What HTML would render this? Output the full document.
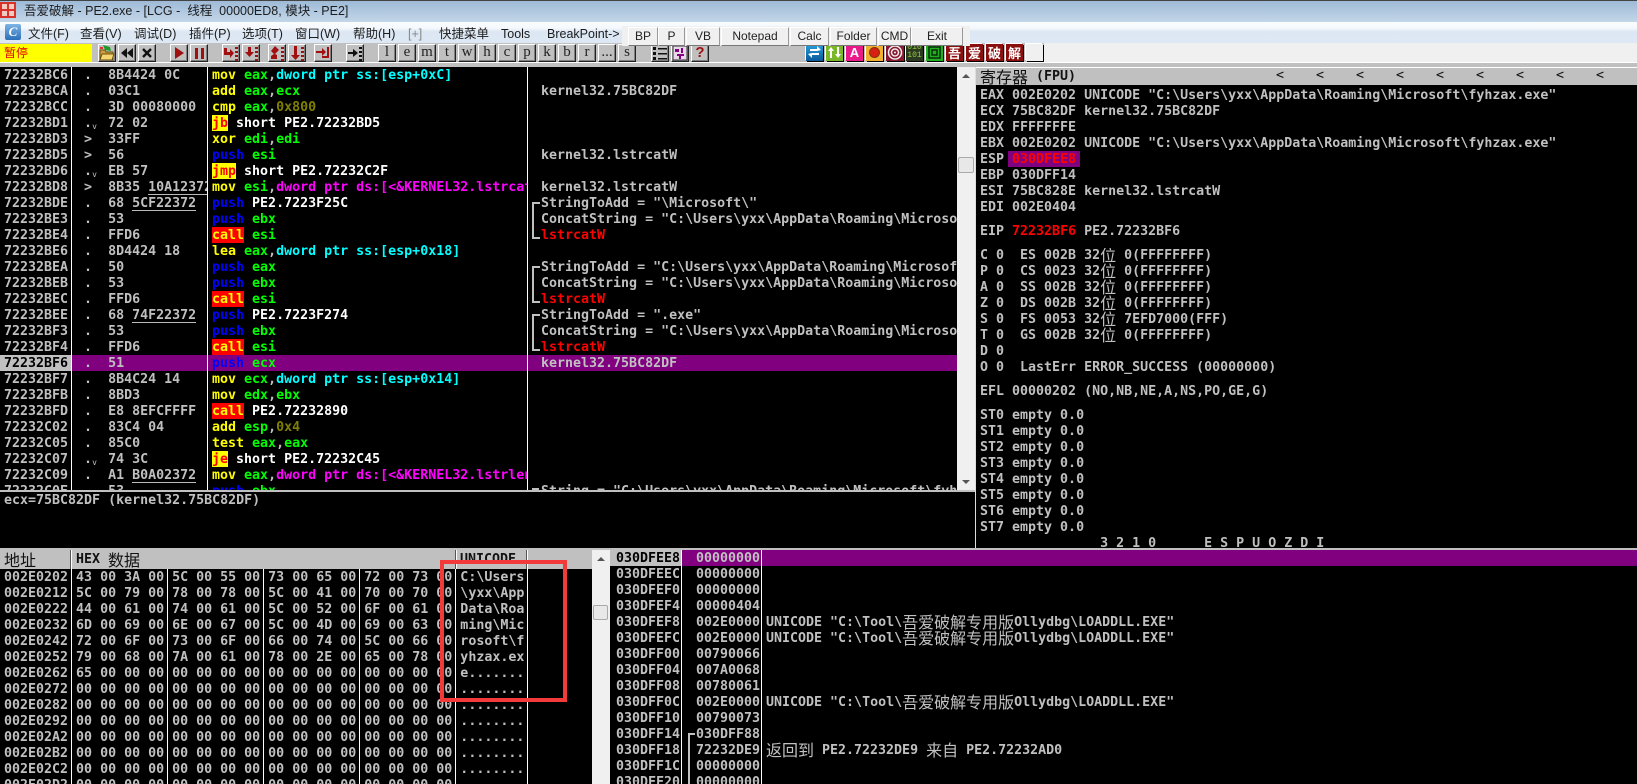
<!DOCTYPE html>
<html>
<head>
<meta charset="utf-8">
<title>吾爱破解 - PE2.exe</title>
<style>
html,body{margin:0;padding:0;width:1637px;height:784px;overflow:hidden;background:#000}
#app{position:relative;width:1637px;height:784px;overflow:hidden;background:#000}
.x{position:absolute;display:block}
pre{position:absolute;margin:0;font-family:"DejaVu Sans Mono","Liberation Mono",monospace;font-size:13.3px;font-weight:bold;line-height:16px;color:#c0c0c0;white-space:pre;overflow:hidden;font-variant-ligatures:none}
.ui{position:absolute;font-family:"Liberation Sans","Noto Sans CJK SC",sans-serif;font-size:12.5px;line-height:16px;color:#1c1c1c;white-space:pre}
.cj{display:inline-block;position:relative;top:-2px;font-family:"WenQuanYi Zen Hei","Noto Sans CJK SC",sans-serif;font-weight:normal;font-size:16px;line-height:16px;height:16px;vertical-align:top}
.y{color:#ff0}.g{color:#0f0}.c{color:#0ff}.m{color:#f0f}.o{color:#808000}.w{color:#fff}.b{color:#00f}.r{color:#f00}.k{color:#000}
.jb{display:inline-block;height:16px;vertical-align:top;background:linear-gradient(#ff0,#ff0) 0 0/100% 15px no-repeat;box-shadow:0 -1px #ff0;color:#f00}
.cl{display:inline-block;height:16px;vertical-align:top;background:linear-gradient(#f00,#f00) 0 0/100% 15px no-repeat;box-shadow:0 -1px #f00;color:#ff0}
.u{display:inline-block;height:15px;vertical-align:top;box-shadow:inset 0 -1px #bbb}
.v{display:inline-block;width:8px;height:16px;vertical-align:top;font-size:8px;line-height:21px;font-weight:normal}
.t{position:absolute;top:44px;width:16px;height:16px;background:#c0c0c0;border:1px solid;border-color:#fff #222 #222 #fff;box-shadow:inset -1px -1px #808080;overflow:hidden;text-align:center}
.t svg{display:block;width:16px;height:16px}
.l{font-family:"Liberation Serif",serif;font-size:15px;line-height:15px;color:#222}
.f{position:absolute;top:27px;height:17px;background:#f0f0f0;border:1px solid;border-color:#fff #999 #777 #fff;font-family:"Liberation Sans",sans-serif;font-size:12px;line-height:17px;color:#222;text-align:center}
.ic{position:absolute;top:44px;width:17px;height:17px;box-shadow:1px 1px #000,-1px -1px #fff;overflow:hidden}
.c2{position:absolute;top:44px;width:17px;height:17px;background:#8b0f0f;color:#fff;box-shadow:1px 1px #000,-1px -1px #fff;font-family:"Noto Sans CJK SC",sans-serif;font-weight:bold;font-size:13px;line-height:17px;text-align:center;overflow:hidden}
.sel{position:absolute;background:#800080}
.vl{position:absolute;width:1px;background:#fff}
.br{position:absolute;left:532px;width:6px;border:2px solid #c0c0c0;border-right:0}
.sb{position:absolute;background:#f0f0f0}
.th{position:absolute;background:#e8e8e8;border:1px solid #aaa;border-radius:2px}
.ar{position:absolute;width:0;height:0;border-left:4px solid transparent;border-right:4px solid transparent}
.hd{position:absolute;background:#c0c0c0}
</style>
</head>
<body>
<div id="app">

<!-- title bar -->
<div class="x" style="left:0;top:0;width:1637px;height:22px;background:linear-gradient(#9db9d6,#c3d6e8)"></div>
<div class="x" style="left:0;top:0;width:1637px;height:1px;background:#444"></div>
<div class="x" style="left:0;top:2px;width:16px;height:16px;background:#d8332a"></div>
<div class="x" style="left:2px;top:4px;width:5px;height:5px;background:#f3c9c0"></div>
<div class="x" style="left:9px;top:4px;width:5px;height:5px;background:#f3c9c0"></div>
<div class="x" style="left:2px;top:11px;width:5px;height:5px;background:#f3c9c0"></div>
<div class="x" style="left:9px;top:11px;width:5px;height:5px;background:#f3c9c0"></div>
<div class="ui" style="left:24px;top:3px;font-size:12.5px">吾爱破解 - PE2.exe - [LCG -  线程  00000ED8, 模块 - PE2]</div>

<!-- menu bar -->
<div class="x" style="left:0;top:22px;width:1637px;height:21px;background:linear-gradient(#fbfdff 0,#f4f8fc 30%,#dce7f3 45%,#dde8f4 100%)"></div>
<div class="x" style="left:5px;top:24px;width:16px;height:16px;background:linear-gradient(#7fb4e6,#2b6fb8);border-radius:2px;color:#fff;font:bold italic 13px/16px 'Liberation Serif',serif;text-align:center">C</div>
<div class="ui" style="left:28px;top:26px">文件(F)</div>
<div class="ui" style="left:80px;top:26px">查看(V)</div>
<div class="ui" style="left:134px;top:26px">调试(D)</div>
<div class="ui" style="left:189px;top:26px">插件(P)</div>
<div class="ui" style="left:242px;top:26px">选项(T)</div>
<div class="ui" style="left:295px;top:26px">窗口(W)</div>
<div class="ui" style="left:353px;top:26px">帮助(H)</div>
<div class="ui" style="left:408px;top:26px;color:#888">[+]</div>
<div class="ui" style="left:439px;top:26px">快捷菜单</div>
<div class="ui" style="left:501px;top:26px">Tools</div>
<div class="ui" style="left:547px;top:26px">BreakPoint-&gt;</div>

<!-- toolbar -->
<div class="x" style="left:0;top:43px;width:1044px;height:19px;background:#c0c0c0"></div>
<div class="x" style="left:1044px;top:43px;width:593px;height:19px;background:#f0f0f0"></div>
<div class="x" style="left:0;top:62px;width:1637px;height:1px;background:#fff"></div>
<div class="x" style="left:0;top:63px;width:1637px;height:4px;background:#c0c0c0"></div>
<div class="x" style="left:0;top:44px;width:92px;height:18px;background:#ff0"></div>
<div class="ui" style="left:4px;top:45px;color:#e00000;font-size:12px">暂停</div>

<div class="t" style="left:98px"><svg viewBox="0 0 16 16"><path d="M1 5h5l1 2h7v8H1z" fill="#c8a040" stroke="#6b5010" stroke-width="1"/><path d="M3 9h12l-2 6H1z" fill="#f5d570" stroke="#6b5010"/><path d="M4 0l7 2 1 4-6-1z" fill="#1d9a2a"/><path d="M1 2h3v2H1z" fill="#d33"/></svg></div>
<div class="t" style="left:118px"><svg viewBox="0 0 16 16"><path d="M8 3v10L2 8zM14 3v10L8 8z" fill="#111"/></svg></div>
<div class="t" style="left:138px"><svg viewBox="0 0 16 16"><path d="M4 4l8 8M12 4l-8 8" stroke="#111" stroke-width="2.400" fill="none"/></svg></div>
<div class="t" style="left:170px"><svg viewBox="0 0 16 16"><path d="M4 2l9 6-9 6z" fill="#a01010"/></svg></div>
<div class="t" style="left:190px"><svg viewBox="0 0 16 16"><path d="M4 3h3v11H4zM10 3h3v11h-3z" fill="#a01010"/></svg></div>
<div class="t" style="left:222px"><svg viewBox="0 0 16 16"><path d="M1 3h3v4h3V4l4 4-4 5v-3H1z" fill="#a01010"/><path d="M12 2h3v2h-3zM12 6h3v2h-3zM12 10h3v2h-3zM12 14h3v2h-3z" fill="#a01010"/></svg></div>
<div class="t" style="left:242px"><svg viewBox="0 0 16 16"><path d="M5 2h3v5h3l-4.500 5L2 7h3z" fill="#a01010"/><path d="M12 2h3v2h-3zM12 6h3v2h-3zM12 10h3v2h-3zM12 14h3v2h-3z" fill="#a01010"/></svg></div>
<div class="t" style="left:268px"><svg viewBox="0 0 16 16"><path d="M6 1l4 4-4 4 2 1v4H2v-3l3-2-3-3z" fill="#a01010"/><path d="M12 2h3v2h-3zM12 6h3v2h-3zM12 10h3v2h-3zM12 14h3v2h-3z" fill="#a01010"/></svg></div>
<div class="t" style="left:288px"><svg viewBox="0 0 16 16"><path d="M5 1h3v9h3l-4.500 5L2 10h3z" fill="#a01010"/><path d="M12 2h3v2h-3zM12 6h3v2h-3zM12 10h3v2h-3zM12 14h3v2h-3z" fill="#a01010"/></svg></div>
<div class="t" style="left:314px"><svg viewBox="0 0 16 16"><path d="M1 6h6V3l4 4-4 4V8H1z" fill="#a01010"/><path d="M12 2h2v11H7v-2h5z" fill="#a01010"/></svg></div>
<div class="t" style="left:346px"><svg viewBox="0 0 16 16"><path d="M1 7h5V4l5 4-5 4V9H1z" fill="#111"/><path d="M12 2h3v2h-3zM12 6h3v2h-3zM12 10h3v2h-3zM12 14h3v2h-3z" fill="#111"/></svg></div>

<div class="t l" style="left:378px">l</div>
<div class="t l" style="left:398px">e</div>
<div class="t l" style="left:418px">m</div>
<div class="t l" style="left:438px">t</div>
<div class="t l" style="left:458px">w</div>
<div class="t l" style="left:478px">h</div>
<div class="t l" style="left:498px">c</div>
<div class="t l" style="left:518px">p</div>
<div class="t l" style="left:538px">k</div>
<div class="t l" style="left:558px">b</div>
<div class="t l" style="left:578px">r</div>
<div class="t l" style="left:598px">...</div>
<div class="t l" style="left:618px">s</div>
<div class="t" style="left:651px"><svg viewBox="0 0 16 16"><path d="M1 2h3v3H1zM1 7h3v3H1zM1 12h3v3H1zM6 3h9v1.500H6zM6 8h9v1.500H6zM6 13h9v1.500H6z" fill="#111"/></svg></div>
<div class="t" style="left:671px"><svg viewBox="0 0 16 16"><path d="M1 1h14v14H1z" fill="#e8d8e8" stroke="#333"/><path d="M3 4h4v3H3zM9 3h2v5H9zM5 9h7v2H5zM7 11h2v3H7z" fill="#800080"/></svg></div>
<div class="t l" style="left:691px;color:#a01010;font-family:'Liberation Sans',sans-serif;font-weight:bold">?</div>

<div class="ic" style="left:806px;background:linear-gradient(#28a0e0,#0a5a9a)"><svg width="17" height="17"><path d="M4 5h7V2l4 4-4 1H4zM13 11H6v3L2 10l4-1h7z" fill="#fff"/></svg></div>
<div class="ic" style="left:826px;background:#7ab82a"><svg width="17" height="17"><path d="M5 3l3 4H6v7H4V7H2zM12 14l-3-4h2V3h2v7h2z" fill="#fff"/></svg></div>
<div class="ic" style="left:846px;background:#ea1a8a;color:#fff;font:bold 13px/17px 'Liberation Sans',sans-serif;text-align:center">A</div>
<div class="ic" style="left:866px;background:#f0b030"><svg width="17" height="17"><circle cx="8.500" cy="8.500" r="5" fill="#d82010" stroke="#803010"/></svg></div>
<div class="ic" style="left:886px;width:18px;background:#8a1830"><svg width="18" height="17"><circle cx="9" cy="8.500" r="6.500" fill="none" stroke="#eee" stroke-width="1.500"/><circle cx="9" cy="8.500" r="3.500" fill="none" stroke="#eee" stroke-width="1.500"/><circle cx="9" cy="8.500" r="1" fill="#eee"/></svg></div>
<div class="ic" style="left:906px;background:#2a3a20;color:#9acb40;font:8px/8px 'Liberation Mono',monospace;text-align:center">010<br>101</div>
<div class="ic" style="left:926px;background:#20b020"><svg width="17" height="17"><path d="M3 3h11v11H3zM6 6h5v5H6z" fill="none" stroke="#0a2a0a" stroke-width="1.500"/></svg></div>
<div class="c2" style="left:946px">吾</div>
<div class="c2" style="left:966px">爱</div>
<div class="c2" style="left:986px">破</div>
<div class="c2" style="left:1006px">解</div>
<div class="ic" style="left:1026px;background:#f0f0f0"></div>

<!-- floating toolbar -->
<div class="x" style="left:622px;top:26px;width:348px;height:20px;background:#f0f0f0"></div>
<div class="f" style="left:628px;width:28px">BP</div>
<div class="f" style="left:658px;width:25px">P</div>
<div class="f" style="left:686px;width:32px">VB</div>
<div class="f" style="left:721px;width:66px">Notepad</div>
<div class="f" style="left:790px;width:37px">Calc</div>
<div class="f" style="left:830px;width:45px">Folder</div>
<div class="f" style="left:878px;width:31px">CMD</div>
<div class="f" style="left:911px;width:50px">Exit</div>

<!-- selected row, disasm -->
<div class="x" style="left:0;top:355px;width:72px;height:16px;background:#c0c0c0"></div>
<div class="sel" style="left:72px;top:355px;width:885px;height:16px"></div>
<div class="vl" style="left:71px;top:67px;height:423px"></div>
<div class="vl" style="left:207px;top:67px;height:423px"></div>
<div class="vl" style="left:527px;top:67px;height:423px"></div>

<pre style="left:4px;top:68px;width:203px;height:422px">72232BC6  .  8B4424 0C
72232BCA  .  03C1
72232BCC  .  3D 00080000
72232BD1  .<span class="v">v</span> 72 02
72232BD3  &gt;  33FF
72232BD5  &gt;  56
72232BD6  .<span class="v">v</span> EB 57
72232BD8  &gt;  8B35 <span class="u">10A12372</span>
72232BDE  .  68 <span class="u">5CF22372</span>
72232BE3  .  53
72232BE4  .  FFD6
72232BE6  .  8D4424 18
72232BEA  .  50
72232BEB  .  53
72232BEC  .  FFD6
72232BEE  .  68 <span class="u">74F22372</span>
72232BF3  .  53
72232BF4  .  FFD6
<span class="k">72232BF6</span>  .  51
72232BF7  .  8B4C24 14
72232BFB  .  8BD3
72232BFD  .  E8 8EFCFFFF
72232C02  .  83C4 04
72232C05  .  85C0
72232C07  .<span class="v">v</span> 74 3C
72232C09  .  A1 <span class="u">B0A02372</span>
72232C0E  .  53</pre>

<pre style="left:212px;top:68px;width:315px;height:422px"><span class="y">mov</span> <span class="g">eax</span>,<span class="c">dword ptr ss:[esp+0xC]</span>
<span class="y">add</span> <span class="g">eax</span>,<span class="g">ecx</span>
<span class="y">cmp</span> <span class="g">eax</span>,<span class="o">0x800</span>
<span class="jb">jb</span> <span class="w">short PE2.72232BD5</span>
<span class="y">xor</span> <span class="g">edi</span>,<span class="g">edi</span>
<span class="b">push</span> <span class="g">esi</span>
<span class="jb">jmp</span> <span class="w">short PE2.72232C2F</span>
<span class="y">mov</span> <span class="g">esi</span>,<span class="m">dword ptr ds:[&lt;&amp;KERNEL32.lstrcatW&gt;]</span>
<span class="b">push</span> <span class="w">PE2.7223F25C</span>
<span class="b">push</span> <span class="g">ebx</span>
<span class="cl">call</span> <span class="g">esi</span>
<span class="y">lea</span> <span class="g">eax</span>,<span class="c">dword ptr ss:[esp+0x18]</span>
<span class="b">push</span> <span class="g">eax</span>
<span class="b">push</span> <span class="g">ebx</span>
<span class="cl">call</span> <span class="g">esi</span>
<span class="b">push</span> <span class="w">PE2.7223F274</span>
<span class="b">push</span> <span class="g">ebx</span>
<span class="cl">call</span> <span class="g">esi</span>
<span class="b">push</span> <span class="g">ecx</span>
<span class="y">mov</span> <span class="g">ecx</span>,<span class="c">dword ptr ss:[esp+0x14]</span>
<span class="y">mov</span> <span class="g">edx</span>,<span class="g">ebx</span>
<span class="cl">call</span> <span class="w">PE2.72232890</span>
<span class="y">add</span> <span class="g">esp</span>,<span class="o">0x4</span>
<span class="y">test</span> <span class="g">eax</span>,<span class="g">eax</span>
<span class="jb">je</span> <span class="w">short PE2.72232C45</span>
<span class="y">mov</span> <span class="g">eax</span>,<span class="m">dword ptr ds:[&lt;&amp;KERNEL32.lstrlenW&gt;]</span>
<span class="b">push</span> <span class="g">ebx</span></pre>

<pre style="left:541px;top:68px;width:416px;height:422px">

kernel32.75BC82DF



kernel32.lstrcatW

kernel32.lstrcatW
StringToAdd = "\Microsoft\"
ConcatString = "C:\Users\yxx\AppData\Roaming\Microsoft\fyhzax.exe"
<span class="r">lstrcatW</span>

StringToAdd = "C:\Users\yxx\AppData\Roaming\Microsoft\fyhzax"
ConcatString = "C:\Users\yxx\AppData\Roaming\Microsoft\fyhzax"
<span class="r">lstrcatW</span>
StringToAdd = ".exe"
ConcatString = "C:\Users\yxx\AppData\Roaming\Microsoft\fyhzax.exe"
<span class="r">lstrcatW</span>
kernel32.75BC82DF







String = "C:\Users\yxx\AppData\Roaming\Microsoft\fyhzax.exe"</pre>
<div class="br" style="top:202px;height:33px"></div>
<div class="br" style="top:266px;height:33px"></div>
<div class="br" style="top:314px;height:33px"></div>
<div class="x" style="left:532px;top:488px;width:7px;height:2px;background:#c0c0c0"></div>

<!-- disasm scrollbar -->
<div class="sb" style="left:957px;top:67px;width:18px;height:423px"></div>
<div class="ar" style="left:962px;top:74px;border-bottom:4px solid #555"></div>
<div class="ar" style="left:962px;top:480px;border-top:4px solid #555"></div>
<div class="th" style="left:958px;top:157px;width:14px;height:14px"></div>

<!-- info pane -->
<div class="x" style="left:0;top:490px;width:975px;height:2px;background:#c0c0c0"></div>
<pre style="left:4px;top:493px;width:900px;height:16px">ecx=75BC82DF (kernel32.75BC82DF)</pre>

<!-- registers -->
<div class="x" style="left:975px;top:67px;width:1px;height:483px;background:#ddd"></div>
<div class="hd" style="left:976px;top:67px;width:661px;height:18px"></div>
<div class="x" style="left:976px;top:67px;width:661px;height:1px;background:#fff"></div>
<pre style="left:980px;top:69px;width:200px;height:16px;color:#111;line-height:16px"><span class="cj" style="width:48px;top:-1px">寄存器</span> (FPU)</pre>
<pre style="left:1276px;top:68px;width:8px;color:#111;font-weight:normal">&lt;</pre>
<pre style="left:1316px;top:68px;width:8px;color:#111;font-weight:normal">&lt;</pre>
<pre style="left:1356px;top:68px;width:8px;color:#111;font-weight:normal">&lt;</pre>
<pre style="left:1396px;top:68px;width:8px;color:#111;font-weight:normal">&lt;</pre>
<pre style="left:1436px;top:68px;width:8px;color:#111;font-weight:normal">&lt;</pre>
<pre style="left:1476px;top:68px;width:8px;color:#111;font-weight:normal">&lt;</pre>
<pre style="left:1516px;top:68px;width:8px;color:#111;font-weight:normal">&lt;</pre>
<pre style="left:1556px;top:68px;width:8px;color:#111;font-weight:normal">&lt;</pre>
<pre style="left:1596px;top:68px;width:8px;color:#111;font-weight:normal">&lt;</pre>

<div class="x" style="left:1008px;top:151px;width:72px;height:16px;background:#800080"></div>
<pre style="left:980px;top:88px;width:650px">EAX 002E0202 UNICODE "C:\Users\yxx\AppData\Roaming\Microsoft\fyhzax.exe"
ECX 75BC82DF kernel32.75BC82DF
EDX FFFFFFFE
EBX 002E0202 UNICODE "C:\Users\yxx\AppData\Roaming\Microsoft\fyhzax.exe"
ESP <span class="r">030DFEE8</span>
EBP 030DFF14
ESI 75BC828E kernel32.lstrcatW
EDI 002E0404</pre>
<pre style="left:980px;top:224px;width:650px">EIP <span class="r">72232BF6</span> PE2.72232BF6</pre>
<pre style="left:980px;top:248px;width:650px">C 0  ES 002B 32<span class="cj" style="width:16px">位</span> 0(FFFFFFFF)
P 0  CS 0023 32<span class="cj" style="width:16px">位</span> 0(FFFFFFFF)
A 0  SS 002B 32<span class="cj" style="width:16px">位</span> 0(FFFFFFFF)
Z 0  DS 002B 32<span class="cj" style="width:16px">位</span> 0(FFFFFFFF)
S 0  FS 0053 32<span class="cj" style="width:16px">位</span> 7EFD7000(FFF)
T 0  GS 002B 32<span class="cj" style="width:16px">位</span> 0(FFFFFFFF)
D 0
O 0  LastErr ERROR_SUCCESS (00000000)</pre>
<pre style="left:980px;top:384px;width:650px">EFL 00000202 (NO,NB,NE,A,NS,PO,GE,G)</pre>
<pre style="left:980px;top:408px;width:650px;height:140px">ST0 empty 0.0
ST1 empty 0.0
ST2 empty 0.0
ST3 empty 0.0
ST4 empty 0.0
ST5 empty 0.0
ST6 empty 0.0
ST7 empty 0.0
               3 2 1 0      E S P U O Z D I</pre>

<!-- dump -->
<div class="x" style="left:0;top:548px;width:1637px;height:2px;background:#c0c0c0"></div>
<div class="hd" style="left:0;top:550px;width:592px;height:19px"></div>
<div class="x" style="left:71px;top:550px;width:1px;height:19px;background:#fff"></div>
<div class="x" style="left:70px;top:550px;width:1px;height:19px;background:#555"></div>
<div class="x" style="left:456px;top:550px;width:1px;height:19px;background:#fff"></div>
<div class="x" style="left:455px;top:550px;width:1px;height:19px;background:#555"></div>
<div class="x" style="left:527px;top:550px;width:1px;height:19px;background:#fff"></div>
<div class="x" style="left:526px;top:550px;width:1px;height:19px;background:#555"></div>
<pre style="left:4px;top:551px;width:60px;height:18px;color:#111"><span class="cj" style="width:32px;top:0">地址</span></pre>
<pre style="left:76px;top:552px;width:370px;height:17px;color:#111">HEX <span class="cj" style="width:32px;top:-1px">数据</span></pre>
<pre style="left:460px;top:552px;width:64px;height:17px;color:#111">UNICODE</pre>

<div class="vl" style="left:71px;top:569px;height:215px"></div>
<div class="vl" style="left:167px;top:569px;height:215px"></div>
<div class="vl" style="left:263px;top:569px;height:215px"></div>
<div class="vl" style="left:359px;top:569px;height:215px"></div>
<div class="vl" style="left:455px;top:569px;height:215px"></div>
<div class="vl" style="left:527px;top:569px;height:215px"></div>

<pre style="left:4px;top:570px;width:525px;height:214px">002E0202 43 00 3A 00 5C 00 55 00 73 00 65 00 72 00 73 00 C:\Users
002E0212 5C 00 79 00 78 00 78 00 5C 00 41 00 70 00 70 00 \yxx\App
002E0222 44 00 61 00 74 00 61 00 5C 00 52 00 6F 00 61 00 Data\Roa
002E0232 6D 00 69 00 6E 00 67 00 5C 00 4D 00 69 00 63 00 ming\Mic
002E0242 72 00 6F 00 73 00 6F 00 66 00 74 00 5C 00 66 00 rosoft\f
002E0252 79 00 68 00 7A 00 61 00 78 00 2E 00 65 00 78 00 yhzax.ex
002E0262 65 00 00 00 00 00 00 00 00 00 00 00 00 00 00 00 e.......
002E0272 00 00 00 00 00 00 00 00 00 00 00 00 00 00 00 00 ........
002E0282 00 00 00 00 00 00 00 00 00 00 00 00 00 00 00 00 ........
002E0292 00 00 00 00 00 00 00 00 00 00 00 00 00 00 00 00 ........
002E02A2 00 00 00 00 00 00 00 00 00 00 00 00 00 00 00 00 ........
002E02B2 00 00 00 00 00 00 00 00 00 00 00 00 00 00 00 00 ........
002E02C2 00 00 00 00 00 00 00 00 00 00 00 00 00 00 00 00 ........
002E02D2 00 00 00 00 00 00 00 00 00 00 00 00 00 00 00 00 ........</pre>

<!-- red annotation box -->
<div class="x" style="left:440px;top:560px;width:119px;height:134px;border:4px solid #f33a3a"></div>

<!-- dump scrollbar -->
<div class="sb" style="left:592px;top:550px;width:18px;height:234px"></div>
<div class="ar" style="left:597px;top:557px;border-bottom:4px solid #555"></div>
<div class="th" style="left:593px;top:605px;width:13px;height:13px"></div>

<!-- stack -->
<div class="x" style="left:610px;top:550px;width:72px;height:16px;background:#c0c0c0"></div>
<div class="sel" style="left:682px;top:550px;width:955px;height:16px"></div>
<div class="vl" style="left:681px;top:550px;height:234px"></div>
<div class="vl" style="left:761px;top:550px;height:234px"></div>
<pre style="left:616px;top:551px;width:64px;height:233px"><span class="k">030DFEE8</span>
030DFEEC
030DFEF0
030DFEF4
030DFEF8
030DFEFC
030DFF00
030DFF04
030DFF08
030DFF0C
030DFF10
030DFF14
030DFF18
030DFF1C
030DFF20</pre>
<pre style="left:696px;top:551px;width:65px;height:233px">00000000
00000000
00000000
00000404
002E0000
002E0000
00790066
007A0068
00780061
002E0000
00790073
030DFF88
72232DE9
00000000
00000000</pre>
<pre style="left:766px;top:551px;width:860px;height:233px">




UNICODE "C:\Tool\<span class="cj" style="width:112px">吾爱破解专用版</span>Ollydbg\LOADDLL.EXE"
UNICODE "C:\Tool\<span class="cj" style="width:112px">吾爱破解专用版</span>Ollydbg\LOADDLL.EXE"



UNICODE "C:\Tool\<span class="cj" style="width:112px">吾爱破解专用版</span>Ollydbg\LOADDLL.EXE"


<span class="cj" style="width:48px">返回到</span> PE2.72232DE9 <span class="cj" style="width:32px">来自</span> PE2.72232AD0</pre>
<div class="x" style="left:688px;top:733px;width:2px;height:51px;background:#c0c0c0"></div>
<div class="x" style="left:688px;top:733px;width:7px;height:2px;background:#c0c0c0"></div>

</div>
</body>
</html>
